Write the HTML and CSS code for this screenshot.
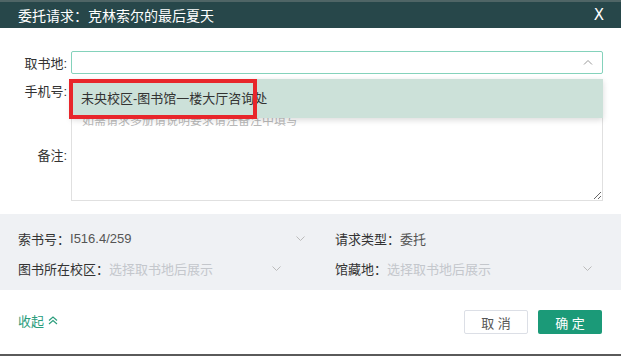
FILE: index.html
```html
<!DOCTYPE html>
<html lang="zh-CN">
<head>
    <meta charset="UTF-8">
    <title>委托请求</title>
    <link rel="stylesheet" href="styles.css">
</head>
<body>
    <div class="dialog">
        <div class="dialog-header">
            <span class="dialog-title">委托请求：克林索尔的最后夏天</span>
            <span class="dialog-close">X</span>
        </div>
        <div class="dialog-body">
            <div class="form-row">
                <label class="form-label">取书地:</label>
                <div class="select-box">
                    <input class="form-input active" type="text">
                    <svg class="arrow-up" width="10" height="6" viewBox="0 0 10 6"><path d="M1 5.5 L5 1.5 L9 5.5" fill="none" stroke="#999" stroke-width="1"/></svg>
                    <div class="dropdown">
                        <div class="dropdown-item">未央校区-图书馆一楼大厅咨询处</div>
                        <div class="highlight"></div>
                    </div>
                </div>
            </div>
            <div class="form-row">
                <label class="form-label">手机号:</label>
                <input class="form-input" type="text">
            </div>
            <div class="form-row remark-row">
                <label class="form-label">备注:</label>
                <textarea class="form-textarea" placeholder="如需请求多册请说明要求请注备注中填写"></textarea>
            </div>
        </div>
        <div class="info">
            <div class="info-cell">
                <span class="info-label">索书号：</span>
                <span class="info-value">I516.4/259</span>
                <svg class="chevron first" width="9" height="5" viewBox="0 0 9 5"><path d="M0.5 0.5 L4.5 4.5 L8.5 0.5" fill="none" stroke="#bbb" stroke-width="1"/></svg>
            </div>
            <div class="info-cell">
                <span class="info-label">请求类型：</span>
                <span class="info-value">委托</span>
            </div>
            <div class="info-cell">
                <span class="info-label">图书所在校区：</span>
                <span class="info-hint">选择取书地后展示</span>
                <svg class="chevron second" width="9" height="5" viewBox="0 0 9 5"><path d="M0.5 0.5 L4.5 4.5 L8.5 0.5" fill="none" stroke="#bbb" stroke-width="1"/></svg>
            </div>
            <div class="info-cell">
                <span class="info-label">馆藏地：</span>
                <span class="info-hint">选择取书地后展示</span>
                <svg class="chevron third" width="9" height="5" viewBox="0 0 9 5"><path d="M0.5 0.5 L4.5 4.5 L8.5 0.5" fill="none" stroke="#bbb" stroke-width="1"/></svg>
            </div>
        </div>
        <div class="dialog-footer">
            <a class="collapse" href="#">收起
                <svg width="10" height="9" viewBox="0 0 10 9"><path d="M1 4.5 L5 1 L9 4.5 M1 8 L5 4.5 L9 8" fill="none" stroke="#2a9d7c" stroke-width="1.1"/></svg>
            </a>
            <div class="buttons">
                <button class="btn btn-cancel">取 消</button>
                <button class="btn btn-ok">确 定</button>
            </div>
        </div>
    </div>
</body>
</html>
```

FILE: styles.css
```css
html, body {
    margin: 0;
    padding: 0;
}
body {
    font-family: "Liberation Sans", "Noto Sans CJK SC", sans-serif;
    font-size: 13px;
    color: #333;
    background-color: #fff;
}
.dialog {
    width: 621px;
    height: 356px;
    display: flex;
    flex-direction: column;
    border-bottom: 2px solid #5a5a5a;
    box-sizing: border-box;
}
.dialog-header {
    height: 28px;
    background-color: #27474a;
    border-top: 2px solid #4f6566;
    box-sizing: border-box;
    display: flex;
    align-items: center;
    justify-content: space-between;
    padding: 0 17px 0 18px;
    color: #fff;
}
.dialog-title {
    font-size: 14px;
}
.dialog-close {
    font-size: 15px;
    font-family: "DejaVu Sans", sans-serif;
}
.dialog-body {
    padding: 23px 18px 0 18px;
    height: 186px;
    box-sizing: border-box;
}
.form-row {
    display: flex;
    align-items: center;
    margin-bottom: 5px;
}
.form-label {
    width: 49px;
    margin-right: 4px;
    text-align: right;
    color: #333;
}
.select-box {
    position: relative;
    width: 532px;
}
.form-input {
    width: 532px;
    height: 23px;
    box-sizing: border-box;
    border: 1px solid #dcdfe6;
    border-radius: 2px;
    outline: none;
}
.form-input.active {
    border-color: #84d2bb;
}
.arrow-up {
    position: absolute;
    right: 10px;
    top: 8px;
}
.dropdown {
    position: absolute;
    left: 0;
    top: 28px;
    width: 532px;
    height: 39px;
    background-color: #cce1d9;
    box-shadow: 0 2px 6px rgba(0, 0, 0, 0.15);
    z-index: 2;
}
.dropdown-item {
    padding: 0 10px;
    line-height: 39px;
    font-size: 13px;
    color: #333;
}
.highlight {
    position: absolute;
    left: -2px;
    top: 0;
    width: 188px;
    height: 40px;
    border: 4px solid #e8262b;
    box-sizing: border-box;
}
.remark-row {
    margin-top: 2px;
}
.form-textarea {
    width: 532px;
    height: 94px;
    box-sizing: border-box;
    border: 1px solid #e0e0e0;
    padding: 3px 10px;
    font-family: inherit;
    font-size: 12px;
    resize: vertical;
}
.form-textarea::placeholder {
    color: #b8b8b8;
}
.info {
    height: 76px;
    background-color: #eff1f4;
    padding: 15px 18px 0 18px;
    box-sizing: border-box;
    display: grid;
    grid-template-columns: 290px 1fr;
    column-gap: 27px;
    row-gap: 11px;
    align-content: start;
}
.info-cell {
    display: flex;
    align-items: center;
    height: 19px;
}
.info-label {
    color: #333;
}
.info-value {
    color: #555;
}
.info-hint {
    color: #c4c7cc;
}
.chevron {
    margin-left: auto;
}
.chevron.first {
    margin-right: 3px;
}
.chevron.second {
    margin-right: 27px;
}
.chevron.third {
    margin-right: 11px;
}
.dialog-footer {
    flex: 1;
    display: flex;
    align-items: center;
    justify-content: space-between;
    padding: 0 19px 0 18px;
}
.collapse {
    color: #2a9d7c;
    text-decoration: none;
    display: flex;
    align-items: center;
    gap: 4px;
    margin-top: -4px;
}
.buttons {
    display: flex;
    gap: 10px;
}
.btn {
    width: 64px;
    height: 24px;
    font-family: inherit;
    font-size: 13px;
    border-radius: 2px;
    cursor: pointer;
}
.btn-cancel {
    background-color: #fff;
    border: 1px solid #dcdfe6;
    color: #555;
}
.btn-ok {
    background-color: #1b9a78;
    border: none;
    color: #fff;
}
```
